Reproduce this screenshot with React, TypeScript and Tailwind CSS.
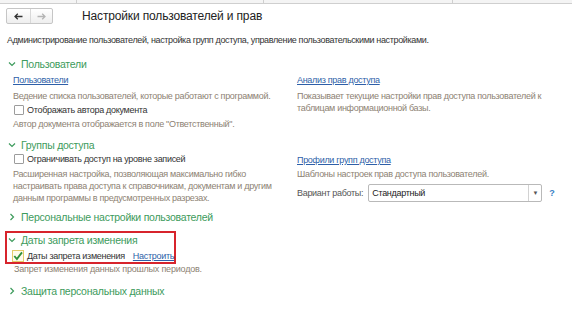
function Chevron({ open }: { open: boolean }) {
  return (
    <svg width="8" height="8" viewBox="0 0 8 8" className="shrink-0">
      {open ? (
        <path d="M1 2.5 L4 5.5 L7 2.5" fill="none" stroke="#3d9b5c" strokeWidth="1.2" />
      ) : (
        <path d="M2.5 1 L5.5 4 L2.5 7" fill="none" stroke="#3d9b5c" strokeWidth="1.2" />
      )}
    </svg>
  );
}

function Header({ title, open = true }: { title: string; open?: boolean }) {
  return (
    <div className="flex h-[16px] items-center gap-[5px] pl-[1px] text-[10.5px] leading-[16px] tracking-[-0.25px] text-[#3d9b5c]">
      <Chevron open={open} />
      <span className="whitespace-nowrap">{title}</span>
    </div>
  );
}

function Box({ checked = false }: { checked?: boolean }) {
  if (checked) {
    return (
      <span className="flex h-[12px] w-[12px] shrink-0 items-center justify-center border border-[#e3cc6a] bg-[#fffbea]">
        <svg width="10" height="10" viewBox="0 0 10 10">
          <path d="M1.3 5 L3.9 8 L9 1.3" fill="none" stroke="#2f8f3a" strokeWidth="1.9" />
        </svg>
      </span>
    );
  }
  return <span className="h-[10px] w-[10px] shrink-0 rounded-[1px] border border-[#9c9c9c] bg-white" />;
}

function Link({ children }: { children: string }) {
  return <span className="text-[#2e5fa8] underline underline-offset-[1px]">{children}</span>;
}

export default function App() {
  return (
    <div className="h-[325px] w-[572px] overflow-hidden bg-white text-[9px] leading-[12px] tracking-[-0.3px] text-[#444] [font-family:'Liberation_Sans',Arial,sans-serif]">
      {/* полоса вкладок сверху */}
      <div className="flex h-[4px] border-b border-[#cfcfcf] bg-[#f4f4f4]">
        <div className="w-[77px] border-r border-[#cfcfcf]" />
        <div className="w-[187px] border-r border-[#cfcfcf]" />
        <div className="w-[189px] border-r border-[#cfcfcf]" />
      </div>

      <div className="mt-[4px] flex h-[16px] items-center pl-[6px]">
        <div className="flex h-[16px] w-[47px] rounded-[2px] border border-[#c6c6c6] bg-gradient-to-b from-white to-[#eeeeee]">
          <div className="flex w-[24px] items-center justify-center border-r border-[#d8d8d8]">
            <svg width="9" height="7" viewBox="0 0 9 7">
              <path d="M8.5 3.5 H1 M3.8 0.7 L1 3.5 L3.8 6.3" fill="none" stroke="#333" strokeWidth="1.3" />
            </svg>
          </div>
          <div className="flex flex-1 items-center justify-center">
            <svg width="9" height="7" viewBox="0 0 9 7">
              <path d="M0.5 3.5 H8 M5.2 0.7 L8 3.5 L5.2 6.3" fill="none" stroke="#b4b4b4" strokeWidth="1.3" />
            </svg>
          </div>
        </div>
        <div className="ml-[29px] text-[12px] leading-[16px] tracking-[-0.15px] text-[#222]">Настройки пользователей и прав</div>
      </div>

      <div className="mt-[10px] h-[12px] px-[7px] tracking-[-0.35px] text-[#333]">
        Администрирование пользователей, настройка групп доступа, управление пользовательскими настройками.
      </div>

      {/* Пользователи */}
      <div className="mt-[10px] px-[7px]">
        <Header title="Пользователи" />
        <div className="grid grid-cols-[284px_1fr] pl-[6px]">
          <div className="flex flex-col">
            <div className="flex h-[16px] items-center"><Link>Пользователи</Link></div>
            <div className="flex h-[15px] items-center text-[#8d8273]">Ведение списка пользователей, которые работают с программой.</div>
            <div className="flex h-[13px] items-center gap-[3px] pl-[1px] text-[#333]">
              <Box />
              <span>Отображать автора документа</span>
            </div>
            <div className="flex h-[15px] items-center text-[#8d8273]">Автор документа отображается в поле "Ответственный".</div>
          </div>
          <div className="flex flex-col">
            <div className="flex h-[16px] items-center"><Link>Анализ прав доступа</Link></div>
            <div className="pt-[2px] text-[#8d8273]">
              Показывает текущие настройки прав доступа пользователей к<br />таблицам информационной базы.
            </div>
          </div>
        </div>
      </div>

      {/* Группы доступа */}
      <div className="mt-[6px] px-[7px]">
        <Header title="Группы доступа" />
        <div className="grid grid-cols-[284px_1fr] pl-[6px]">
          <div className="flex flex-col">
            <div className="flex h-[12px] items-center gap-[3px] pl-[1px] text-[#333]">
              <Box />
              <span>Ограничивать доступ на уровне записей</span>
            </div>
            <div className="pt-[3px] text-[#8d8273]">
              Расширенная настройка, позволяющая максимально гибко<br />
              настраивать права доступа к справочникам, документам и другим<br />
              данным программы в предусмотренных разрезах.
            </div>
          </div>
          <div className="flex flex-col">
            <div className="flex h-[14px] items-center"><Link>Профили групп доступа</Link></div>
            <div className="flex h-[14px] items-center text-[#8d8273]">Шаблоны настроек прав доступа пользователей.</div>
            <div className="mt-[3px] flex items-center">
              <span className="whitespace-nowrap text-[#555]">Вариант работы:</span>
              <div className="ml-[5px] flex h-[18px] w-[174px] rounded-[2px] border border-[#b9b9b9] bg-white">
                <div className="flex flex-1 items-center px-[3px] text-[#222]">Стандартный</div>
                <div className="flex w-[13px] items-center justify-center border-l border-[#d2d2d2] text-[6px] text-[#555]">▼</div>
              </div>
              <span className="ml-[7px] font-bold text-[#3a7fc4]">?</span>
            </div>
          </div>
        </div>
      </div>

      <div className="mt-[5px] px-[7px]">
        <Header title="Персональные настройки пользователей" open={false} />
      </div>

      {/* Даты запрета изменения */}
      <div className="mt-[6px] pl-[5px]">
        <div className="h-[33px] w-[171px] border-2 border-[#d7242c]">
          <div className="-mt-[1px]">
            <Header title="Даты запрета изменения" />
          </div>
          <div className="flex h-[15px] items-center gap-[3px] pl-[5px] text-[#333]">
            <Box checked />
            <span className="whitespace-nowrap">Даты запрета изменения</span>
            <span className="ml-[5px] whitespace-nowrap"><Link>Настроить</Link></span>
          </div>
        </div>
        <div className="h-[10px] pl-[9px] leading-[10px] tracking-[-0.2px] text-[#8d8273]">Запрет изменения данных прошлых периодов.</div>
      </div>

      <div className="mt-[9px] px-[7px]">
        <Header title="Защита персональных данных" open={false} />
      </div>
    </div>
  );
}
